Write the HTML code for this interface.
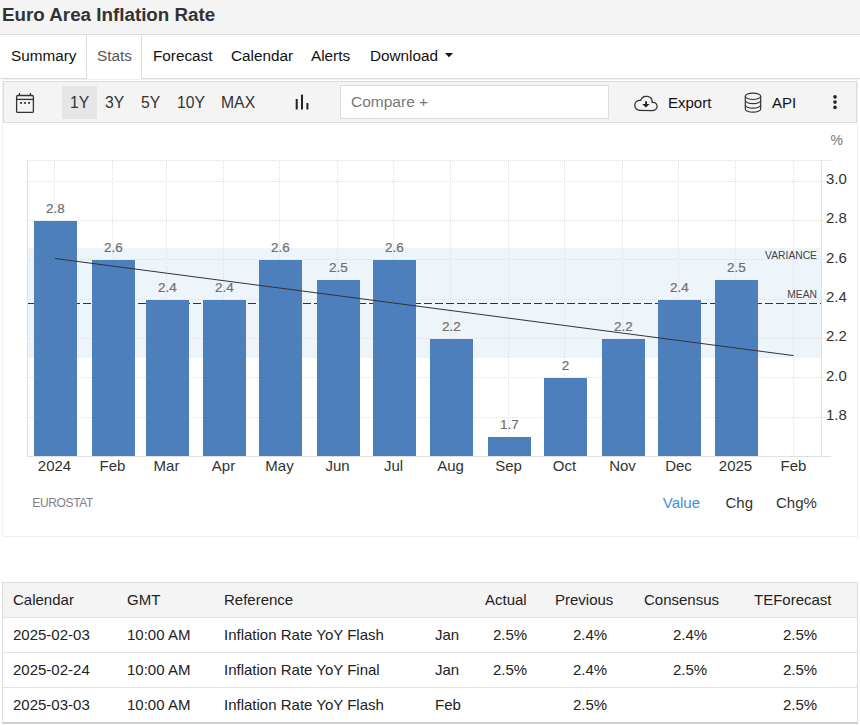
<!DOCTYPE html>
<html><head><meta charset="utf-8">
<style>
*{box-sizing:border-box;margin:0;padding:0}
html,body{width:860px;height:725px;overflow:hidden;background:#fff;font-family:"Liberation Sans",sans-serif;color:#222}
.a{position:absolute;white-space:nowrap}
#title{left:0;top:0;width:860px;height:35px;background:#f4f4f4;border-bottom:1px solid #dcdcdc}
#title span{position:absolute;left:2px;top:4.6px;font-size:18.8px;font-weight:bold;color:#333;line-height:20px}
#tabline{left:0;top:78px;width:860px;height:1px;background:#dcdcdc}
#stats{left:86px;top:35px;width:56px;height:44px;background:#fff;border-left:1px solid #dcdcdc;border-right:1px solid #dcdcdc}
.tab{font-size:15.3px;line-height:18px;top:47px;color:#111}
#outer{left:2px;top:79px;width:856px;height:458px;border:1px solid #efefef}
#toolbar{left:3px;top:81px;width:854px;height:42px;background:#f4f4f4;border:1px solid #dcdcdc}
.tb{font-size:15.5px;line-height:18px;top:93.5px;color:#333}
.rg{font-size:15.75px;top:94px}
#y1{left:62px;top:86px;width:35px;height:33px;background:#e6e6e6}
#compare{left:340px;top:85px;width:269px;height:34px;background:#fff;border:1px solid #dedcd4}
#compare span{position:absolute;left:10px;top:7px;font-size:15.5px;line-height:18px;color:#777}
svg text{font-family:"Liberation Sans",sans-serif}
.dl{font-size:13.5px;fill:#6e6e6e;stroke:#6e6e6e;stroke-width:0.2}
.xl{font-size:15px;fill:#333}
.yl{font-size:15px;fill:#333}
.pct{font-size:14px;fill:#777}
.band{font-size:10.3px;fill:#444}
.src{font-size:12px;fill:#808080;letter-spacing:-0.35px}
.tg{font-size:15px;fill:#333}
.tg.act{fill:#3990e6}
#tbl{left:2px;top:582px;width:856px;border-collapse:collapse;font-size:15px;color:#222}
.tbl{position:absolute;left:2px;top:582px;width:856px;height:142px;border:1px solid #dcdcdc;border-bottom:2px solid #d0d0d0}
.hdr{position:absolute;left:3px;top:583px;width:854px;height:35px;background:#f4f4f4}
.rl{position:absolute;left:3px;width:854px;height:1px;background:#dde3ea}
.tc{font-size:15px;line-height:18px;color:#222}
</style></head><body>
<div id="title" class="a"><span>Euro Area Inflation Rate</span></div>
<div id="tabline" class="a"></div>
<div id="stats" class="a"></div>
<div class="a tab" style="left:11px">Summary</div>
<div class="a tab" style="left:97px;color:#555">Stats</div>
<div class="a tab" style="left:153px">Forecast</div>
<div class="a tab" style="left:231px">Calendar</div>
<div class="a tab" style="left:311px">Alerts</div>
<div class="a tab" style="left:370px">Download</div>
<svg class="a" style="left:444px;top:52px" width="10" height="6"><path d="M1 1 L9 1 L5 5.2 Z" fill="#111"/></svg>
<div id="outer" class="a"></div>
<div id="toolbar" class="a"></div>
<div id="y1" class="a"></div>
<div class="a tb rg" style="left:70px">1Y</div>
<div class="a tb rg" style="left:105px">3Y</div>
<div class="a tb rg" style="left:141px">5Y</div>
<div class="a tb rg" style="left:177px">10Y</div>
<div class="a tb rg" style="left:221px">MAX</div>
<div id="compare" class="a"><span>Compare +</span></div>
<div class="a tb" style="left:668px;color:#111;font-size:15px;top:94px">Export</div>
<div class="a tb" style="left:772px;color:#111;font-size:15px;top:94px">API</div>
<!-- icons -->
<svg class="a" style="left:0;top:0" width="860" height="130">
 <g fill="none" stroke="#333" stroke-width="1.3">
  <rect x="16.6" y="95.5" width="16.8" height="16.9" rx="1.2"/>
  <line x1="16.6" y1="99.4" x2="33.4" y2="99.4"/>
  <line x1="19.5" y1="93" x2="19.5" y2="95.5"/>
  <line x1="30.4" y1="93" x2="30.4" y2="95.5"/>
 </g>
 <g fill="#111"><rect x="20.2" y="102.1" width="1.7" height="1.7"/><rect x="24.2" y="102.1" width="1.7" height="1.7"/><rect x="28.2" y="102.1" width="1.7" height="1.7"/></g>
 <g fill="#222">
  <rect x="295.7" y="99" width="2" height="10.5" rx="0.5"/>
  <rect x="301" y="94.6" width="2" height="14.9" rx="0.5"/>
  <rect x="306.4" y="103.1" width="2" height="6.4" rx="0.5"/>
 </g>
 <path transform="translate(0,0.4)" d="M639.7 109.9 A5 5 0 1 1 640.71 100.00 A5.9 5.9 0 0 1 652.20 101.98 A4.1 4.1 0 1 1 653 110.1 Z" fill="none" stroke="#333" stroke-width="1.25"/>
 <path d="M645.1 101.2 H647 V104.1 H649.6 L645.9 107.5 L642.2 104.1 H645.1 Z" fill="#222"/>
 <g fill="none" stroke="#333" stroke-width="1.2">
  <ellipse cx="753" cy="96.3" rx="7.7" ry="3.2"/>
  <path d="M745.3 96.3 V109 A7.7 3.2 0 0 0 760.7 109 V96.3"/>
  <path d="M745.3 100.5 A7.7 3.2 0 0 0 760.7 100.5"/>
  <path d="M745.3 105 A7.7 3.2 0 0 0 760.7 105"/>
 </g>
 <g fill="#222"><circle cx="835" cy="96.9" r="1.8"/><circle cx="835" cy="102.1" r="1.8"/><circle cx="835" cy="107.4" r="1.8"/></g>
</svg>
<svg class="a" style="left:0;top:0" width="860" height="560">
<rect x="27" y="248" width="794" height="110" fill="#edf5fb"/>
<line x1="28" y1="160.5" x2="822" y2="160.5" stroke="#e0e0e0" stroke-dasharray="1,1"/>
<line x1="28" y1="181.5" x2="822" y2="181.5" stroke="#e0e0e0" stroke-dasharray="1,1"/>
<line x1="28" y1="220.5" x2="822" y2="220.5" stroke="#e0e0e0" stroke-dasharray="1,1"/>
<line x1="28" y1="259.5" x2="822" y2="259.5" stroke="#e0e0e0" stroke-dasharray="1,1"/>
<line x1="28" y1="299.5" x2="822" y2="299.5" stroke="#e0e0e0" stroke-dasharray="1,1"/>
<line x1="28" y1="338.5" x2="822" y2="338.5" stroke="#e0e0e0" stroke-dasharray="1,1"/>
<line x1="28" y1="377.5" x2="822" y2="377.5" stroke="#e0e0e0" stroke-dasharray="1,1"/>
<line x1="28" y1="417.5" x2="822" y2="417.5" stroke="#e0e0e0" stroke-dasharray="1,1"/>
<line x1="54.5" y1="161" x2="54.5" y2="456" stroke="#e0e0e0" stroke-dasharray="1,1"/>
<line x1="112.5" y1="161" x2="112.5" y2="456" stroke="#e0e0e0" stroke-dasharray="1,1"/>
<line x1="166.5" y1="161" x2="166.5" y2="456" stroke="#e0e0e0" stroke-dasharray="1,1"/>
<line x1="223.5" y1="161" x2="223.5" y2="456" stroke="#e0e0e0" stroke-dasharray="1,1"/>
<line x1="279.5" y1="161" x2="279.5" y2="456" stroke="#e0e0e0" stroke-dasharray="1,1"/>
<line x1="337.5" y1="161" x2="337.5" y2="456" stroke="#e0e0e0" stroke-dasharray="1,1"/>
<line x1="393.5" y1="161" x2="393.5" y2="456" stroke="#e0e0e0" stroke-dasharray="1,1"/>
<line x1="450.5" y1="161" x2="450.5" y2="456" stroke="#e0e0e0" stroke-dasharray="1,1"/>
<line x1="508.5" y1="161" x2="508.5" y2="456" stroke="#e0e0e0" stroke-dasharray="1,1"/>
<line x1="564.5" y1="161" x2="564.5" y2="456" stroke="#e0e0e0" stroke-dasharray="1,1"/>
<line x1="622.5" y1="161" x2="622.5" y2="456" stroke="#e0e0e0" stroke-dasharray="1,1"/>
<line x1="678.5" y1="161" x2="678.5" y2="456" stroke="#e0e0e0" stroke-dasharray="1,1"/>
<line x1="735.5" y1="161" x2="735.5" y2="456" stroke="#e0e0e0" stroke-dasharray="1,1"/>
<line x1="793.5" y1="161" x2="793.5" y2="456" stroke="#e0e0e0" stroke-dasharray="1,1"/>
<line x1="27.5" y1="160" x2="27.5" y2="457" stroke="#e0e0e0"/>
<line x1="821.5" y1="160" x2="821.5" y2="457" stroke="#e0e0e0"/>
<line x1="27" y1="456.5" x2="831" y2="456.5" stroke="#e0e0e0"/>
<line x1="822" y1="160.5" x2="831" y2="160.5" stroke="#ececec"/>
<line x1="821" y1="181.5" x2="831" y2="181.5" stroke="#eeeeee"/>
<line x1="821" y1="220.5" x2="831" y2="220.5" stroke="#eeeeee"/>
<line x1="821" y1="259.5" x2="831" y2="259.5" stroke="#eeeeee"/>
<line x1="821" y1="299.5" x2="831" y2="299.5" stroke="#eeeeee"/>
<line x1="821" y1="338.5" x2="831" y2="338.5" stroke="#eeeeee"/>
<line x1="821" y1="377.5" x2="831" y2="377.5" stroke="#eeeeee"/>
<line x1="821" y1="417.5" x2="831" y2="417.5" stroke="#eeeeee"/>
<line x1="28" y1="303.5" x2="821" y2="303.5" stroke="#333" stroke-dasharray="8,3"/>
<rect x="34" y="221" width="43" height="235" fill="#4d7fbc"/>
<rect x="92" y="260" width="43" height="196" fill="#4d7fbc"/>
<rect x="146" y="300" width="43" height="156" fill="#4d7fbc"/>
<rect x="203" y="300" width="43" height="156" fill="#4d7fbc"/>
<rect x="259" y="260" width="43" height="196" fill="#4d7fbc"/>
<rect x="317" y="280" width="43" height="176" fill="#4d7fbc"/>
<rect x="373" y="260" width="43" height="196" fill="#4d7fbc"/>
<rect x="430" y="339" width="43" height="117" fill="#4d7fbc"/>
<rect x="488" y="437" width="43" height="19" fill="#4d7fbc"/>
<rect x="544" y="378" width="43" height="78" fill="#4d7fbc"/>
<rect x="602" y="339" width="43" height="117" fill="#4d7fbc"/>
<rect x="658" y="300" width="43" height="156" fill="#4d7fbc"/>
<rect x="715" y="280" width="43" height="176" fill="#4d7fbc"/>
<line x1="55" y1="258.5" x2="793.6" y2="355.6" stroke="#333" stroke-width="1"/>
<text x="55.5" y="213" text-anchor="middle" class="dl">2.8</text>
<text x="113.5" y="252" text-anchor="middle" class="dl">2.6</text>
<text x="167.5" y="292" text-anchor="middle" class="dl">2.4</text>
<text x="224.5" y="292" text-anchor="middle" class="dl">2.4</text>
<text x="280.5" y="252" text-anchor="middle" class="dl">2.6</text>
<text x="338.5" y="272" text-anchor="middle" class="dl">2.5</text>
<text x="394.5" y="252" text-anchor="middle" class="dl">2.6</text>
<text x="451.5" y="331" text-anchor="middle" class="dl">2.2</text>
<text x="509.5" y="429" text-anchor="middle" class="dl">1.7</text>
<text x="565.5" y="370" text-anchor="middle" class="dl">2</text>
<text x="623.5" y="331" text-anchor="middle" class="dl">2.2</text>
<text x="679.5" y="292" text-anchor="middle" class="dl">2.4</text>
<text x="736.5" y="272" text-anchor="middle" class="dl">2.5</text>
<text x="54.5" y="471" text-anchor="middle" class="xl">2024</text>
<text x="112.5" y="471" text-anchor="middle" class="xl">Feb</text>
<text x="166.5" y="471" text-anchor="middle" class="xl">Mar</text>
<text x="223.5" y="471" text-anchor="middle" class="xl">Apr</text>
<text x="279.5" y="471" text-anchor="middle" class="xl">May</text>
<text x="337.5" y="471" text-anchor="middle" class="xl">Jun</text>
<text x="393.5" y="471" text-anchor="middle" class="xl">Jul</text>
<text x="450.5" y="471" text-anchor="middle" class="xl">Aug</text>
<text x="508.5" y="471" text-anchor="middle" class="xl">Sep</text>
<text x="564.5" y="471" text-anchor="middle" class="xl">Oct</text>
<text x="622.5" y="471" text-anchor="middle" class="xl">Nov</text>
<text x="678.5" y="471" text-anchor="middle" class="xl">Dec</text>
<text x="735.5" y="471" text-anchor="middle" class="xl">2025</text>
<text x="793.5" y="471" text-anchor="middle" class="xl">Feb</text>
<text x="826" y="184.0" class="yl">3.0</text>
<text x="826" y="223.3" class="yl">2.8</text>
<text x="826" y="262.7" class="yl">2.6</text>
<text x="826" y="302.0" class="yl">2.4</text>
<text x="826" y="341.3" class="yl">2.2</text>
<text x="826" y="380.7" class="yl">2.0</text>
<text x="826" y="420.0" class="yl">1.8</text>
<text x="830.5" y="145" class="pct">%</text>
<text x="817" y="259" text-anchor="end" class="band">VARIANCE</text>
<text x="817" y="298" text-anchor="end" class="band">MEAN</text>
<text x="32.3" y="507" class="src">EUROSTAT</text>
<text x="662.8" y="507.5" class="tg act">Value</text>
<text x="725.5" y="507.5" class="tg">Chg</text>
<text x="776" y="507.5" class="tg">Chg%</text>
</svg>
<!-- table -->
<div class="tbl"></div>
<div class="hdr"></div>
<div class="rl" style="top:617px"></div>
<div class="rl" style="top:652px"></div>
<div class="rl" style="top:687px"></div>
<div class="a tc" style="left:13px;top:591px">Calendar</div>
<div class="a tc" style="left:127px;top:591px">GMT</div>
<div class="a tc" style="left:224px;top:591px">Reference</div>
<div class="a tc" style="left:485px;top:591px">Actual</div>
<div class="a tc" style="left:555px;top:591px">Previous</div>
<div class="a tc" style="left:644px;top:591px">Consensus</div>
<div class="a tc" style="left:754px;top:591px">TEForecast</div>

<div class="a tc" style="left:13px;top:626px">2025-02-03</div>
<div class="a tc" style="left:127px;top:626px">10:00 AM</div>
<div class="a tc" style="left:224px;top:626px">Inflation Rate YoY Flash</div>
<div class="a tc" style="left:435px;top:626px">Jan</div>
<div class="a tc" style="left:493px;top:626px">2.5%</div>
<div class="a tc" style="left:573px;top:626px">2.4%</div>
<div class="a tc" style="left:673px;top:626px">2.4%</div>
<div class="a tc" style="left:783px;top:626px">2.5%</div>

<div class="a tc" style="left:13px;top:661px">2025-02-24</div>
<div class="a tc" style="left:127px;top:661px">10:00 AM</div>
<div class="a tc" style="left:224px;top:661px">Inflation Rate YoY Final</div>
<div class="a tc" style="left:435px;top:661px">Jan</div>
<div class="a tc" style="left:493px;top:661px">2.5%</div>
<div class="a tc" style="left:573px;top:661px">2.4%</div>
<div class="a tc" style="left:673px;top:661px">2.5%</div>
<div class="a tc" style="left:783px;top:661px">2.5%</div>

<div class="a tc" style="left:13px;top:696px">2025-03-03</div>
<div class="a tc" style="left:127px;top:696px">10:00 AM</div>
<div class="a tc" style="left:224px;top:696px">Inflation Rate YoY Flash</div>
<div class="a tc" style="left:435px;top:696px">Feb</div>
<div class="a tc" style="left:573px;top:696px">2.5%</div>
<div class="a tc" style="left:783px;top:696px">2.5%</div>
</body></html>
